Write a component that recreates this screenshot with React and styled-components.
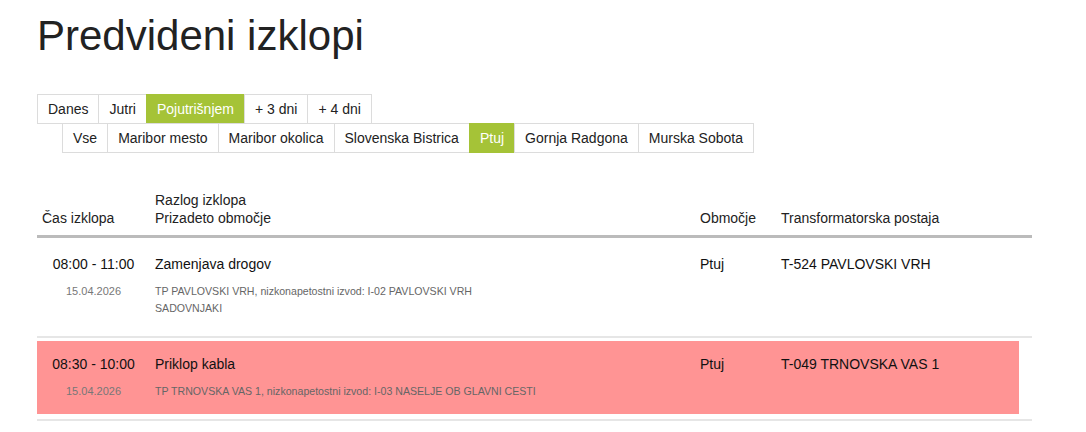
import React from 'react';
import styled, { createGlobalStyle } from 'styled-components';

const GlobalStyle = createGlobalStyle`
  body {
    margin: 0;
    background: #fff;
    font-family: "Liberation Sans", Arial, sans-serif;
    color: #222;
  }
`;

const days = ['Danes', 'Jutri', 'Pojutrišnjem', '+ 3 dni', '+ 4 dni'];
const areas = ['Vse', 'Maribor mesto', 'Maribor okolica', 'Slovenska Bistrica', 'Ptuj', 'Gornja Radgona', 'Murska Sobota'];

const outages = [
  {
    time: '08:00 - 11:00',
    date: '15.04.2026',
    reason: 'Zamenjava drogov',
    detail: 'TP PAVLOVSKI VRH, nizkonapetostni izvod: I-02 PAVLOVSKI VRH SADOVNJAKI',
    area: 'Ptuj',
    station: 'T-524 PAVLOVSKI VRH',
  },
  {
    time: '08:30 - 10:00',
    date: '15.04.2026',
    reason: 'Priklop kabla',
    detail: 'TP TRNOVSKA VAS 1, nizkonapetostni izvod: I-03 NASELJE OB GLAVNI CESTI',
    area: 'Ptuj',
    station: 'T-049 TRNOVSKA VAS 1',
    active: true,
  },
];

const App = () => {
  return (
    <Page>
      <GlobalStyle />
      <Title>Predvideni izklopi</Title>
      <Tabs>
        {days.map(d => (
          <Tab key={d} selected={d === 'Pojutrišnjem'}>{d}</Tab>
        ))}
      </Tabs>
      <Tabs indent>
        {areas.map(a => (
          <Tab key={a} selected={a === 'Ptuj'}>{a}</Tab>
        ))}
      </Tabs>
      <Table>
        <HeadRow>
          <HeadCell>Čas izklopa</HeadCell>
          <HeadCell>Razlog izklopa<br />Prizadeto območje</HeadCell>
          <HeadCell>Območje</HeadCell>
          <HeadCell>Transformatorska postaja</HeadCell>
        </HeadRow>
        {outages.map(o => (
          <Row key={o.time}>
            <RowBody active={o.active}>
              <TimeCell>
                <Main>{o.time}</Main>
                <DateText>{o.date}</DateText>
              </TimeCell>
              <Cell>
                <Main>{o.reason}</Main>
                <Detail>{o.detail}</Detail>
              </Cell>
              <Cell><Main>{o.area}</Main></Cell>
              <Cell><Main>{o.station}</Main></Cell>
            </RowBody>
          </Row>
        ))}
      </Table>
    </Page>
  );
};

const Page = styled.div`
  padding: 0 54px 0 37px;
`;

const Title = styled.h1`
  margin: 0;
  padding-top: 12px;
  height: 94px;
  box-sizing: border-box;
  font-size: 42px;
  font-weight: normal;
  line-height: 48px;
  color: #222;
`;

const Tabs = styled.div`
  display: flex;
  margin-left: ${p => (p.indent ? '25px' : '0')};
  margin-top: ${p => (p.indent ? '-1px' : '0')};
`;

const Tab = styled.div`
  height: 28px;
  line-height: 28px;
  padding: 0 10px;
  font-size: 14px;
  border: 1px solid #dcdcdc;
  margin-left: -1px;
  background: ${p => (p.selected ? '#a5c337' : '#fff')};
  color: ${p => (p.selected ? '#fff' : '#222')};
  border-color: ${p => (p.selected ? '#a5c337' : '#dcdcdc')};
  &:first-child {
    margin-left: 0;
  }
`;

const cols = '113px 545px 81px 1fr';

const Table = styled.div`
  margin-top: 38px;
  width: 995px;
`;

const HeadRow = styled.div`
  display: grid;
  grid-template-columns: ${cols};
  align-items: end;
  border-bottom: 3px solid #bbb;
  padding-bottom: 8px;
`;

const HeadCell = styled.div`
  padding-left: 5px;
  font-size: 14px;
  line-height: 18px;
`;

const Row = styled.div`
  border-bottom: 2px solid #e6e6e6;
  padding: 3px 13px 5px 0;
`;

const RowBody = styled.div`
  display: grid;
  grid-template-columns: ${cols};
  padding: 13px 0 14px;
  background: ${p => (p.active ? '#ff9494' : 'transparent')};
`;

const Cell = styled.div`
  padding-left: 5px;
`;

const TimeCell = styled.div`
  text-align: center;
`;

const Main = styled.div`
  font-size: 14px;
  line-height: 20px;
  color: #111;
`;

const DateText = styled.div`
  margin-top: 9px;
  font-size: 11px;
  line-height: 17px;
  color: #777;
`;

const Detail = styled.div`
  margin-top: 9px;
  font-size: 10.6px;
  line-height: 17px;
  color: #666;
  max-width: 384px;
`;

export default App;
